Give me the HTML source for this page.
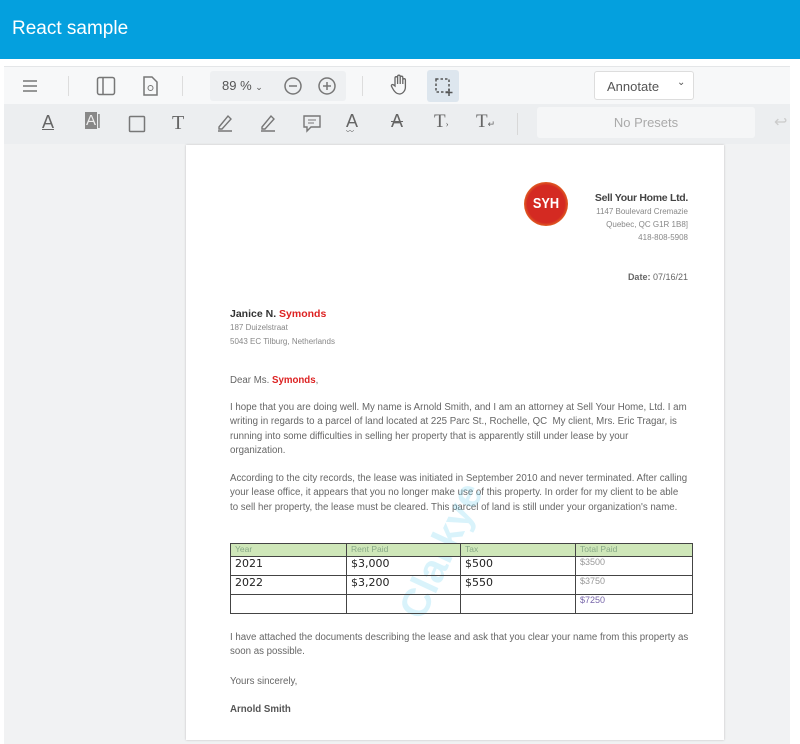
<!DOCTYPE html>
<html><head><meta charset="utf-8"><style>
*{margin:0;padding:0;box-sizing:border-box}
body{width:800px;height:744px;overflow:hidden;background:#fff;font-family:"Liberation Sans",sans-serif;position:relative}
.hdr{position:absolute;left:0;top:0;width:800px;height:59px;background:#04a0de;color:#fff;font-size:19px;padding:18px 0 0 12px}
.tb1{position:absolute;left:4px;top:66px;width:786px;height:38px;background:#f7f8f9;border-top:1px solid #e4e6e8}
.tb2{position:absolute;left:4px;top:104px;width:786px;height:40px;background:#eceef0}
.view{position:absolute;left:4px;top:144px;width:786px;height:600px;background:#f1f2f3}
.ab{position:absolute}
.ic{position:absolute;color:#666;font-size:18px}
.page{position:absolute;left:186px;top:145px;width:538px;height:595px;background:#fff;box-shadow:0 0 2px #bbb;color:#666;font-size:9.7px}
.page p{position:absolute;left:44px;line-height:14.3px;white-space:nowrap}
table{position:absolute;left:44px;top:398px;width:463px;border-collapse:collapse}
td{border:1.5px solid #444;height:19px;font-size:11px;color:#222;padding:0 4px;vertical-align:top;font-family:"DejaVu Sans",sans-serif}
tr.h td{background:#cfe7b9;height:13px;font-size:8.5px;color:#8a8;font-family:"Liberation Sans",sans-serif}
td.g{color:#999;font-size:9px;font-family:"Liberation Sans",sans-serif}
</style></head><body>
<div class="hdr">React sample</div>
<div class="tb1">
 <svg class="ab" style="left:18px;top:12px" width="16" height="14"><path d="M1 2h14M1 7h14M1 12h14" stroke="#777" stroke-width="1.5"/></svg>
 <div class="ab" style="left:64px;top:9px;width:1px;height:20px;background:#ddd"></div>
 <svg class="ab" style="left:92px;top:9px" width="20" height="20"><rect x="1.5" y="1.5" width="17" height="17" rx="2" fill="none" stroke="#777" stroke-width="1.5"/><path d="M7 2v16" stroke="#777" stroke-width="1.5"/></svg>
 <svg class="ab" style="left:138px;top:9px" width="16" height="20"><path d="M2 1h8l5 5v13H2z" fill="none" stroke="#777" stroke-width="1.5"/><circle cx="8.5" cy="12" r="2.5" fill="none" stroke="#777"/></svg>
 <div class="ab" style="left:178px;top:9px;width:1px;height:20px;background:#ddd"></div>
 <div class="ab" style="left:206px;top:4px;width:136px;height:30px;background:#eef0f2;border-radius:3px"></div>
 <div class="ab" style="left:218px;top:11px;font-size:13px;color:#555">89 % <span style="font-size:9px">&#8964;</span></div>
 <svg class="ab" style="left:279px;top:9px" width="20" height="20"><circle cx="10" cy="10" r="8" fill="none" stroke="#777" stroke-width="1.5"/><path d="M6 10h8" stroke="#777" stroke-width="1.5"/></svg>
 <svg class="ab" style="left:313px;top:9px" width="20" height="20"><circle cx="10" cy="10" r="8" fill="none" stroke="#777" stroke-width="1.5"/><path d="M6 10h8M10 6v8" stroke="#777" stroke-width="1.5"/></svg>
 <div class="ab" style="left:358px;top:9px;width:1px;height:20px;background:#ddd"></div>
 <svg class="ab" style="left:385px;top:7px" width="20" height="22"><path d="M6 12V4a1.3 1.3 0 0 1 2.6 0v6V2.5a1.3 1.3 0 0 1 2.6 0V10V3.5a1.3 1.3 0 0 1 2.6 0V10V6a1.3 1.3 0 0 1 2.6 0v7c0 4-3 7-6 7s-5-2-7-6l-1-2a1.3 1.3 0 0 1 2.3-1z" fill="none" stroke="#666" stroke-width="1.3"/></svg>
 <div class="ab" style="left:423px;top:3px;width:32px;height:32px;background:#dde6ee;border-radius:3px"></div>
 <svg class="ab" style="left:430px;top:10px" width="20" height="20"><rect x="2" y="2" width="13" height="13" fill="none" stroke="#555" stroke-width="1.5" stroke-dasharray="2.5 2"/><path d="M15 12v7M11.5 15.5h7" stroke="#555" stroke-width="1.5"/></svg>
 <div class="ab" style="left:590px;top:4px;width:100px;height:29px;background:#fff;border:1px solid #ddd;border-radius:3px;font-size:13px;color:#555;padding:7px 0 0 12px">Annotate <span style="position:absolute;left:82px;top:5px;font-size:10px">&#8964;</span></div>
</div>
<div class="tb2">
 <div class="ic" style="left:38px;top:8px;text-decoration:underline">A</div>
 <div class="ic" style="left:81px;top:8px;font-size:15px"><span style="background:#888;color:#eee;padding:0 1px">A</span>|</div>
 <svg class="ab" style="left:124px;top:11px" width="18" height="18"><rect x="1.5" y="1.5" width="15" height="15" rx="1" fill="none" stroke="#777" stroke-width="1.5"/></svg>
 <div class="ic" style="left:168px;top:8px;font-family:'Liberation Serif',serif;font-size:20px">T</div>
 <svg class="ab" style="left:212px;top:9px" width="18" height="20"><path d="M3 14L12 3l3 3-9 10H3zM2 18h14" fill="none" stroke="#777" stroke-width="1.4"/></svg>
 <svg class="ab" style="left:255px;top:9px" width="18" height="20"><path d="M3 14L12 3l3 3-9 10H3zM2 18h14" fill="none" stroke="#777" stroke-width="1.4"/></svg>
 <svg class="ab" style="left:298px;top:10px" width="20" height="20"><path d="M2 2h16v11H9l-4 4v-4H2z" fill="none" stroke="#777" stroke-width="1.4"/><path d="M6 6h8M6 9h6" stroke="#777"/></svg>
 <div class="ic" style="left:342px;top:7px">A<div style="font-size:8px;margin-top:-6px">〰</div></div>
 <div class="ic" style="left:387px;top:7px;text-decoration:line-through">A</div>
 <div class="ic" style="left:430px;top:7px;font-family:'Liberation Serif',serif;font-size:19px">T<span style="font-size:9px">›</span></div>
 <div class="ic" style="left:472px;top:7px;font-family:'Liberation Serif',serif;font-size:19px">T<span style="font-size:9px">↵</span></div>
 <div class="ab" style="left:513px;top:9px;width:1px;height:22px;background:#d8d8d8"></div>
 <div class="ab" style="left:533px;top:3px;width:218px;height:31px;background:#f5f6f7;border-radius:3px;color:#aaa;font-size:13px;text-align:center;padding-top:8px">No Presets</div>
 <div class="ab" style="left:770px;top:8px;color:#ccc;font-size:16px">↩</div>
</div>
<div class="view"></div>
<div class="page">
 <div class="ab" style="left:338px;top:37px;width:44px;height:44px;border-radius:50%;background:radial-gradient(circle,#d42a22 60%,#f0a020 85%,#fff 100%)"></div>
 <div class="ab" style="left:338px;top:50px;width:44px;text-align:center;color:#fff;font-weight:bold;font-size:15px;transform:scaleX(.85)">SYH</div>
 <div class="ab" style="right:36px;top:47px;text-align:right;font-size:8px;line-height:13px;color:#888"><b style="font-size:10.5px;color:#444;letter-spacing:-.3px">Sell Your Home Ltd.</b><br>1147 Boulevard Cremazie<br>Quebec, QC G1R 1B8]<br>418-808-5908</div>
 <div class="ab" style="right:36px;top:127px;font-size:9px;color:#666"><b>Date:</b> 07/16/21</div>
 <div class="ab" style="left:44px;top:162px;font-size:10.5px;color:#333;font-weight:bold;line-height:14px">Janice N. <span style="color:#d22">Symonds</span><div style="font-size:8px;font-weight:normal;color:#888;line-height:14px">187 Duizelstraat<br>5043 EC Tilburg, Netherlands</div></div>
 <p style="top:229px">Dear Ms. <b style="color:#d22">Symonds</b>,</p>
 <p style="top:256px">I hope that you are doing well. My name is Arnold Smith, and I am an attorney at Sell Your Home, Ltd. I am<br>writing in regards to a parcel of land located at 225 Parc St., Rochelle, QC&nbsp; My client, Mrs. Eric Tragar, is<br>running into some difficulties in selling her property that is apparently still under lease by your<br>organization.</p>
 <p style="top:327px">According to the city records, the lease was initiated in September 2010 and never terminated. After calling<br>your lease office, it appears that you no longer make use of this property. In order for my client to be able<br>to sell her property, the lease must be cleared. This parcel of land is still under your organization's name.</p>
 <div class="ab" style="left:205px;top:462px;font-size:40px;color:rgba(80,200,235,.22);transform:rotate(-65deg);transform-origin:left top;white-space:nowrap;font-weight:bold">Clarkye</div>
 <table>
  <tr class="h"><td style="width:116px">Year</td><td style="width:114px">Rent Paid</td><td style="width:115px">Tax</td><td>Total Paid</td></tr>
  <tr><td>2021</td><td>$3,000</td><td>$500</td><td class="g">$3500</td></tr>
  <tr><td>2022</td><td>$3,200</td><td>$550</td><td class="g">$3750</td></tr>
  <tr><td style="height:13px"></td><td></td><td></td><td class="g" style="color:#76a;height:13px">$7250</td></tr>
 </table>
 <p style="top:486px">I have attached the documents describing the lease and ask that you clear your name from this property as<br>soon as possible.</p>
 <p style="top:530px">Yours sincerely,</p>
 <p style="top:558px;font-weight:bold;color:#555">Arnold Smith</p>
</div>
</body></html>
